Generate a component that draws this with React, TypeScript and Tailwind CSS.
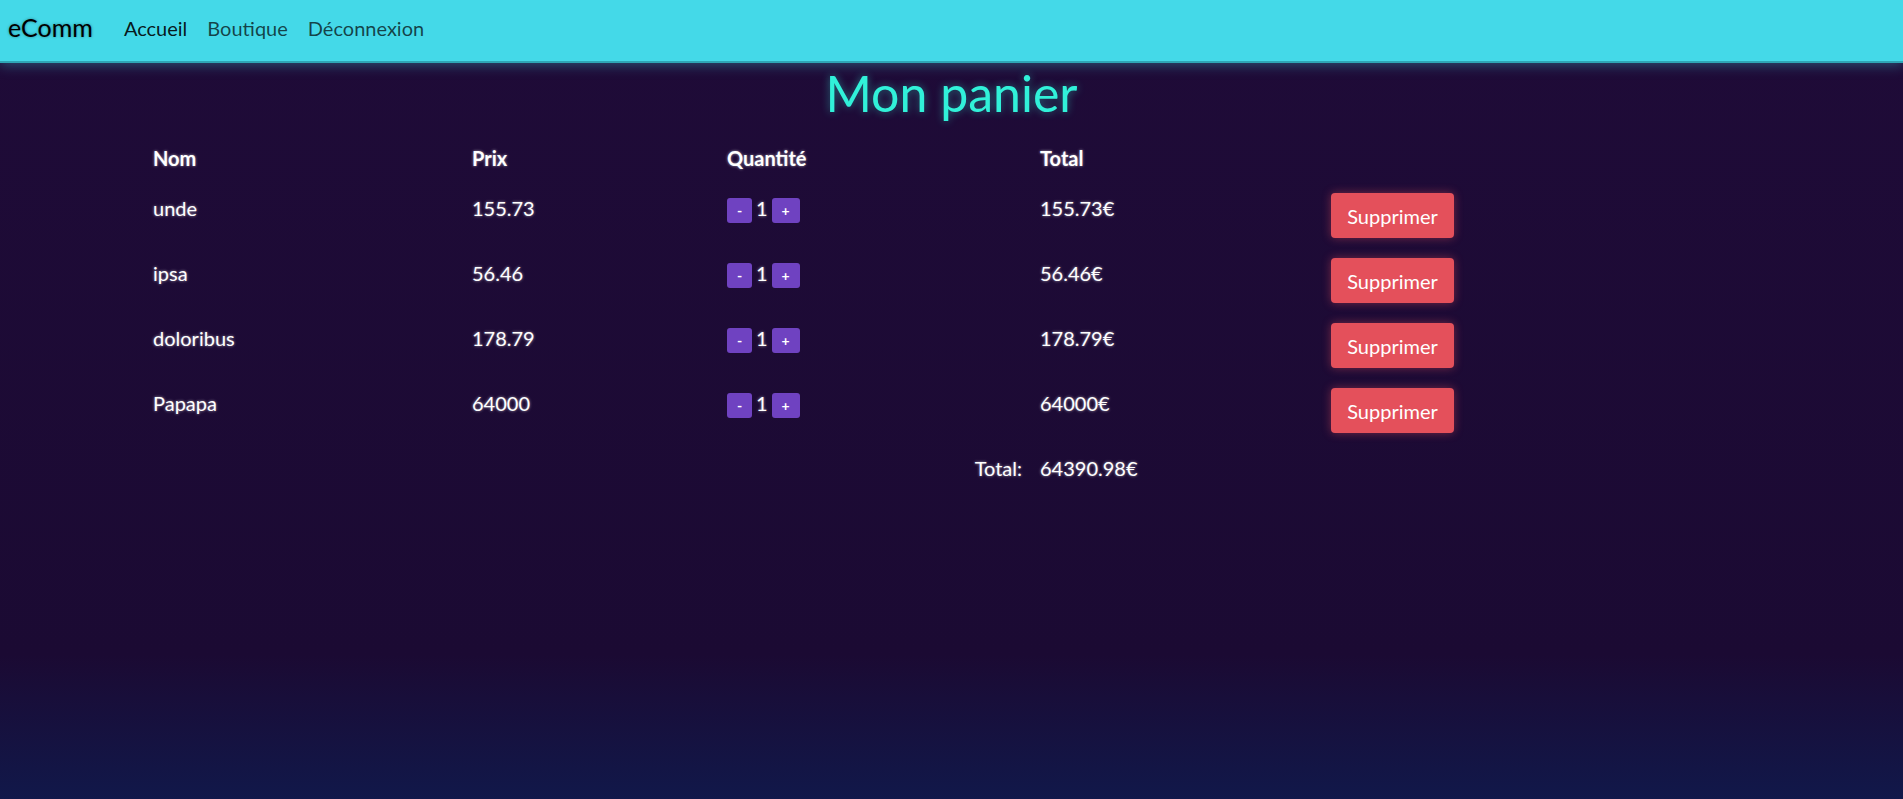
const items = [
  { name: 'unde', price: '155.73', qty: 1, total: '155.73€' },
  { name: 'ipsa', price: '56.46', qty: 1, total: '56.46€' },
  { name: 'doloribus', price: '178.79', qty: 1, total: '178.79€' },
  { name: 'Papapa', price: '64000', qty: 1, total: '64000€' },
];

const glow = '[text-shadow:0_0_3px_rgba(255,255,255,0.6)]';

export default function App() {
  return (
    <div className="min-h-[799px] bg-[linear-gradient(to_bottom,#1f0b38_0%,#1b0a33_82%,#11184a_100%)] font-['Lato','Liberation_Sans',sans-serif]">
      <nav className="h-[63px] bg-[#44d9e8] border-b-2 border-[#2fa6b6] shadow-[0_2px_12px_rgba(68,217,232,0.35)] flex items-center pl-2 pb-[6px]">
        <a href="#" className="text-[25px] text-black [text-shadow:0_0_3px_rgba(0,0,0,0.4)] mr-[31px]">
          eComm
        </a>
        <div className="flex gap-[20px] text-[20px]">
          <a href="#" className="text-black/90">Accueil</a>
          <a href="#" className="text-black/70">Boutique</a>
          <a href="#" className="text-black/70">Déconnexion</a>
        </div>
      </nav>

      <h1 className="text-center text-[50px] leading-[1.2] text-[#31f1d9] [text-shadow:0_0_8px_rgba(49,241,217,0.45)]">
        Mon panier
      </h1>

      <div className={`mt-[10px] pl-[153px] text-[20px] leading-[30px] text-white ${glow}`}>
        <div className="grid grid-cols-[319px_255px_313px_291px_auto] font-bold py-[10px]">
          <div>Nom</div>
          <div>Prix</div>
          <div>Quantité</div>
          <div>Total</div>
          <div></div>
        </div>

        {items.map((item, i) => (
          <div key={i} className="grid grid-cols-[319px_255px_313px_291px_auto] items-start py-[10px]">
            <div>{item.name}</div>
            <div>{item.price}</div>
            <div className="flex items-start">
              <button className="mt-[5px] w-[25px] h-[25px] rounded-[3px] bg-[#6f42c1] text-[14px] font-bold leading-[25px] text-white">
                -
              </button>
              <span className="mx-[4px]">{item.qty}</span>
              <button className="mt-[5px] w-[28px] h-[25px] rounded-[3px] bg-[#6f42c1] text-[14px] font-bold leading-[25px] text-white">
                +
              </button>
            </div>
            <div>{item.total}</div>
            <div>
              <button className="w-[123px] h-[45px] rounded-[4px] bg-[#e4505b] text-white text-[20px] shadow-[0_0_10px_rgba(228,80,91,0.45)]">
                Supprimer
              </button>
            </div>
          </div>
        ))}

        <div className="grid grid-cols-[319px_255px_313px_291px_auto] py-[10px]">
          <div></div>
          <div></div>
          <div className="text-right pr-[18px]">Total:</div>
          <div>64390.98€</div>
          <div></div>
        </div>
      </div>
    </div>
  );
}
